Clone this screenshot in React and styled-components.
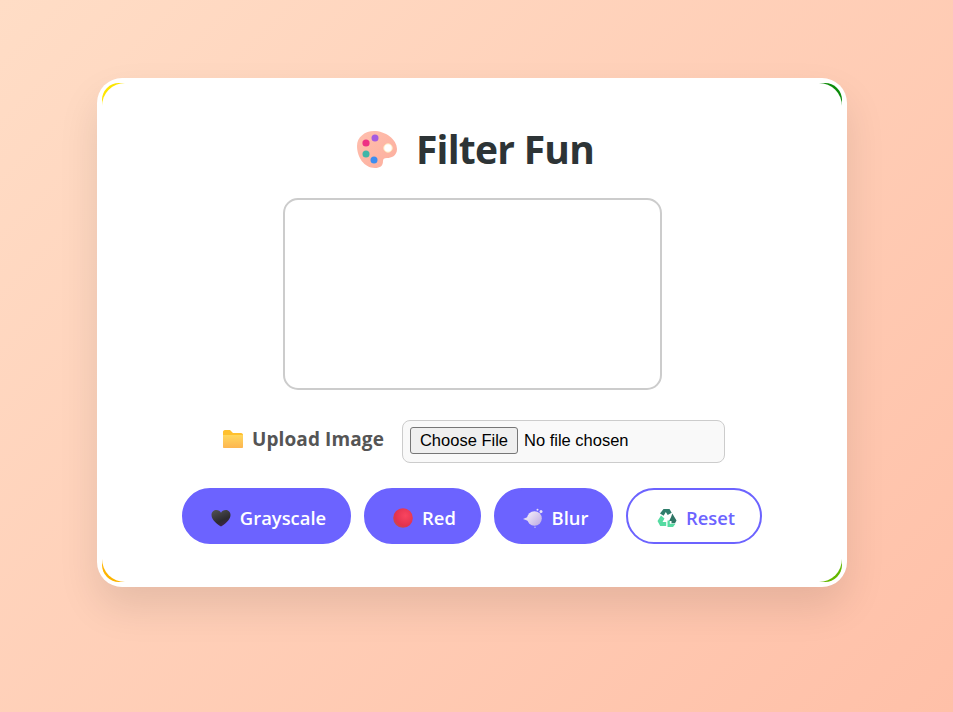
import React from 'react';
import styled, { createGlobalStyle } from 'styled-components';

const GlobalStyle = createGlobalStyle`
  html, body {
    margin: 0;
    padding: 0;
  }
  body {
    min-height: 100vh;
    background: linear-gradient(135deg, #ffddc6 0%, #ffc0a8 100%);
    font-family: "Open Sans", "Noto Sans", sans-serif;
  }
`;

const Page = styled.main`
  box-sizing: border-box;
  height: 712px;
  padding: 78px 106px 0 97px;
  overflow: hidden;
`;

const Card = styled.section`
  position: relative;
  isolation: isolate;
  box-sizing: border-box;
  width: 750px;
  height: 509px;
  padding: 44px 0 0;
  display: flex;
  flex-direction: column;
  align-items: center;
  background: #fff;
  border-radius: 25px;
  box-shadow: 0 20px 40px rgba(0, 0, 0, 0.1);

  &::before {
    content: '';
    position: absolute;
    inset: 5px;
    z-index: -2;
    border-radius: 17px;
    background:
      linear-gradient(to right, #ffe600, #0a8a0a) top / 100% 50% no-repeat,
      linear-gradient(to right, #ffb400, #62b800) bottom / 100% 50% no-repeat;
  }

  &::after {
    content: '';
    position: absolute;
    inset: 5px;
    z-index: -1;
    border-radius: 23px;
    background: #fff;
  }
`;

const Title = styled.h1`
  display: flex;
  align-items: center;
  gap: 18px;
  margin: 0 0 0 6px;
  font-size: 39px;
  letter-spacing: -0.75px;
  line-height: 54px;
  font-weight: 700;
  color: #2d3436;
`;

const Preview = styled.div`
  box-sizing: border-box;
  width: 379px;
  height: 192px;
  margin-top: 22px;
  border: 2px solid #ccc;
  border-radius: 15px;
`;

const UploadRow = styled.div`
  display: flex;
  align-items: center;
  gap: 18px;
  margin-top: 30px;
  margin-left: 3px;
`;

const UploadLabel = styled.label`
  display: flex;
  align-items: center;
  gap: 8px;
  padding-bottom: 6px;
  font-size: 19px;
  letter-spacing: 0.1px;
  font-weight: 700;
  color: #555;
`;

const FileInput = styled.input`
  box-sizing: border-box;
  width: 323px;
  height: 43px;
  padding: 6px 7px 8px;
  background: #f9f9f9;
  border: 1px solid #ccc;
  border-radius: 8px;
  font-family: "Liberation Sans", Arial, sans-serif;
  font-size: 16.5px;
  color: #000;

  &::file-selector-button {
    box-sizing: border-box;
    width: 108px;
    height: 27px;
    margin-right: 6px;
    padding: 0;
    font: inherit;
    background: #efefef;
    border: 1px solid #767676;
    border-radius: 3px;
  }
`;

const ButtonRow = styled.div`
  display: flex;
  gap: 13px;
  margin-top: 25px;
`;

const FilterButton = styled.button`
  box-sizing: border-box;
  display: flex;
  align-items: center;
  justify-content: center;
  gap: 9px;
  width: ${p => p.$width}px;
  height: 56px;
  padding: 3px 0 0 4px;
  border-radius: 28px;
  border: 2px solid #6c63ff;
  background: ${p => (p.$outline ? '#fff' : '#6c63ff')};
  color: ${p => (p.$outline ? '#6c63ff' : '#fff')};
  font-family: inherit;
  font-size: 18.4px;
  font-weight: 600;
`;

const PaletteIcon = () => (
  <svg width="42" height="40" viewBox="0 0 42 40">
    <defs>
      <linearGradient id="palette" x1="0" y1="0" x2="1" y2="1">
        <stop offset="0" stopColor="#ffbfae" />
        <stop offset="1" stopColor="#fcae9d" />
      </linearGradient>
    </defs>
    <path
      d="M1 17C1 8 9 2 18 2c11 0 23 8 23 18 0 7-6 9-10 9-3 0-4 1-4 3 0 5-3 7-8 7C8 39 1 28 1 17z"
      fill="url(#palette)"
    />
    <circle cx="32" cy="19" r="4.300" fill="#fff" stroke="#ffe3b8" strokeWidth="1" />
    <circle cx="19" cy="9" r="3.500" fill="#a45be0" />
    <circle cx="10" cy="14" r="3.600" fill="#ee2f84" />
    <circle cx="10" cy="25" r="3.500" fill="#3fb6a8" />
    <circle cx="18" cy="31" r="3.500" fill="#3d8df0" />
  </svg>
);

const FolderIcon = () => (
  <svg width="22" height="20" viewBox="0 0 22 20">
    <defs>
      <linearGradient id="folder" x1="0" y1="0" x2="0" y2="1">
        <stop offset="0" stopColor="#ffd75e" />
        <stop offset="1" stopColor="#fdb650" />
      </linearGradient>
    </defs>
    <path d="M1 3c0-1 .6-2 2-2h5l3 3h8c1.500 0 2 1 2 2v3H1z" fill="#ffc02e" />
    <path d="M1 6h19c.6 0 1 .4 1 1v11c0 .6-.4 1-1 1H2c-.6 0-1-.4-1-1z" fill="url(#folder)" />
  </svg>
);

const HeartIcon = () => (
  <svg width="20" height="20" viewBox="0 0 20 20">
    <defs>
      <linearGradient id="heart" x1="0.2" y1="0" x2="0.7" y2="1">
        <stop offset="0" stopColor="#4f4f51" />
        <stop offset="0.65" stopColor="#2c2a30" />
        <stop offset="1" stopColor="#43234f" />
      </linearGradient>
    </defs>
    <path
      d="M10 18.500C7 16.500 .5 12.500.5 7 .5 3.800 3 2 5.300 2 7.500 2 9 3 10 4.800 11 3 12.500 2 14.700 2 17 2 19.500 3.800 19.500 7c0 5.500-6.500 9.500-9.500 11.500z"
      fill="url(#heart)"
    />
  </svg>
);

const RedBallIcon = () => (
  <svg width="20" height="20" viewBox="0 0 20 20">
    <defs>
      <radialGradient id="ball" cx="0.62" cy="0.38" r="0.72">
        <stop offset="0" stopColor="#f9455f" />
        <stop offset="0.72" stopColor="#e2324f" />
        <stop offset="1" stopColor="#b9574a" />
      </radialGradient>
    </defs>
    <circle cx="10" cy="10" r="9.800" fill="url(#ball)" />
  </svg>
);

const DashIcon = () => (
  <svg width="20" height="20" viewBox="0 0 20 20">
    <defs>
      <linearGradient id="dash" x1="0" y1="0" x2="1" y2="1">
        <stop offset="0" stopColor="#f6f1fa" />
        <stop offset="1" stopColor="#bba8e2" />
      </linearGradient>
    </defs>
    <path d="M0 11 7 8l1 6z" fill="#e3dcf3" />
    <circle cx="11.500" cy="10.500" r="7.300" fill="url(#dash)" />
    <circle cx="18" cy="3.500" r="1.500" fill="#e9e2f6" />
    <circle cx="14.500" cy="1.800" r="1" fill="#e9e2f6" />
    <circle cx="12" cy="19.300" r="0.700" fill="#d6cbee" />
  </svg>
);

const RecycleIcon = () => (
  <svg width="20" height="20" viewBox="0 0 20 20">
    <path d="M6.500 1h6l2.200 3.800-4 2.300L8.800 4 6.600 7.800 3 5.600z" fill="#2f7d6b" />
    <path d="M15.300 5.500 19.500 12.500l-1.500 2.700h-3.500v-2.200l-2.500 0 2-3.800z" fill="#2f7565" />
    <path d="M4 7.500 .5 13l2.700 5h6V14H5.500L7.500 10.500z" fill="#56dba2" />
    <path d="M10.500 12.500v6.500h5.500l2.500-3.200h-5.700v-3.300z" fill="#56dba2" />
  </svg>
);

const filters = [
  { name: 'Grayscale', width: 169, icon: <HeartIcon /> },
  { name: 'Red', width: 117, icon: <RedBallIcon /> },
  { name: 'Blur', width: 119, icon: <DashIcon /> },
  { name: 'Reset', width: 136, icon: <RecycleIcon />, outline: true },
];

const App = () => (
  <React.Fragment>
    <GlobalStyle />
    <Page>
      <Card>
        <Title>
          <PaletteIcon />
          Filter Fun
        </Title>
        <Preview />
        <UploadRow>
          <UploadLabel htmlFor="upload">
            <FolderIcon />
            Upload Image
          </UploadLabel>
          <FileInput id="upload" type="file" />
        </UploadRow>
        <ButtonRow>
          {filters.map(filter => (
            <FilterButton key={filter.name} $width={filter.width} $outline={filter.outline}>
              {filter.icon}
              {filter.name}
            </FilterButton>
          ))}
        </ButtonRow>
      </Card>
    </Page>
  </React.Fragment>
);

export default App;
